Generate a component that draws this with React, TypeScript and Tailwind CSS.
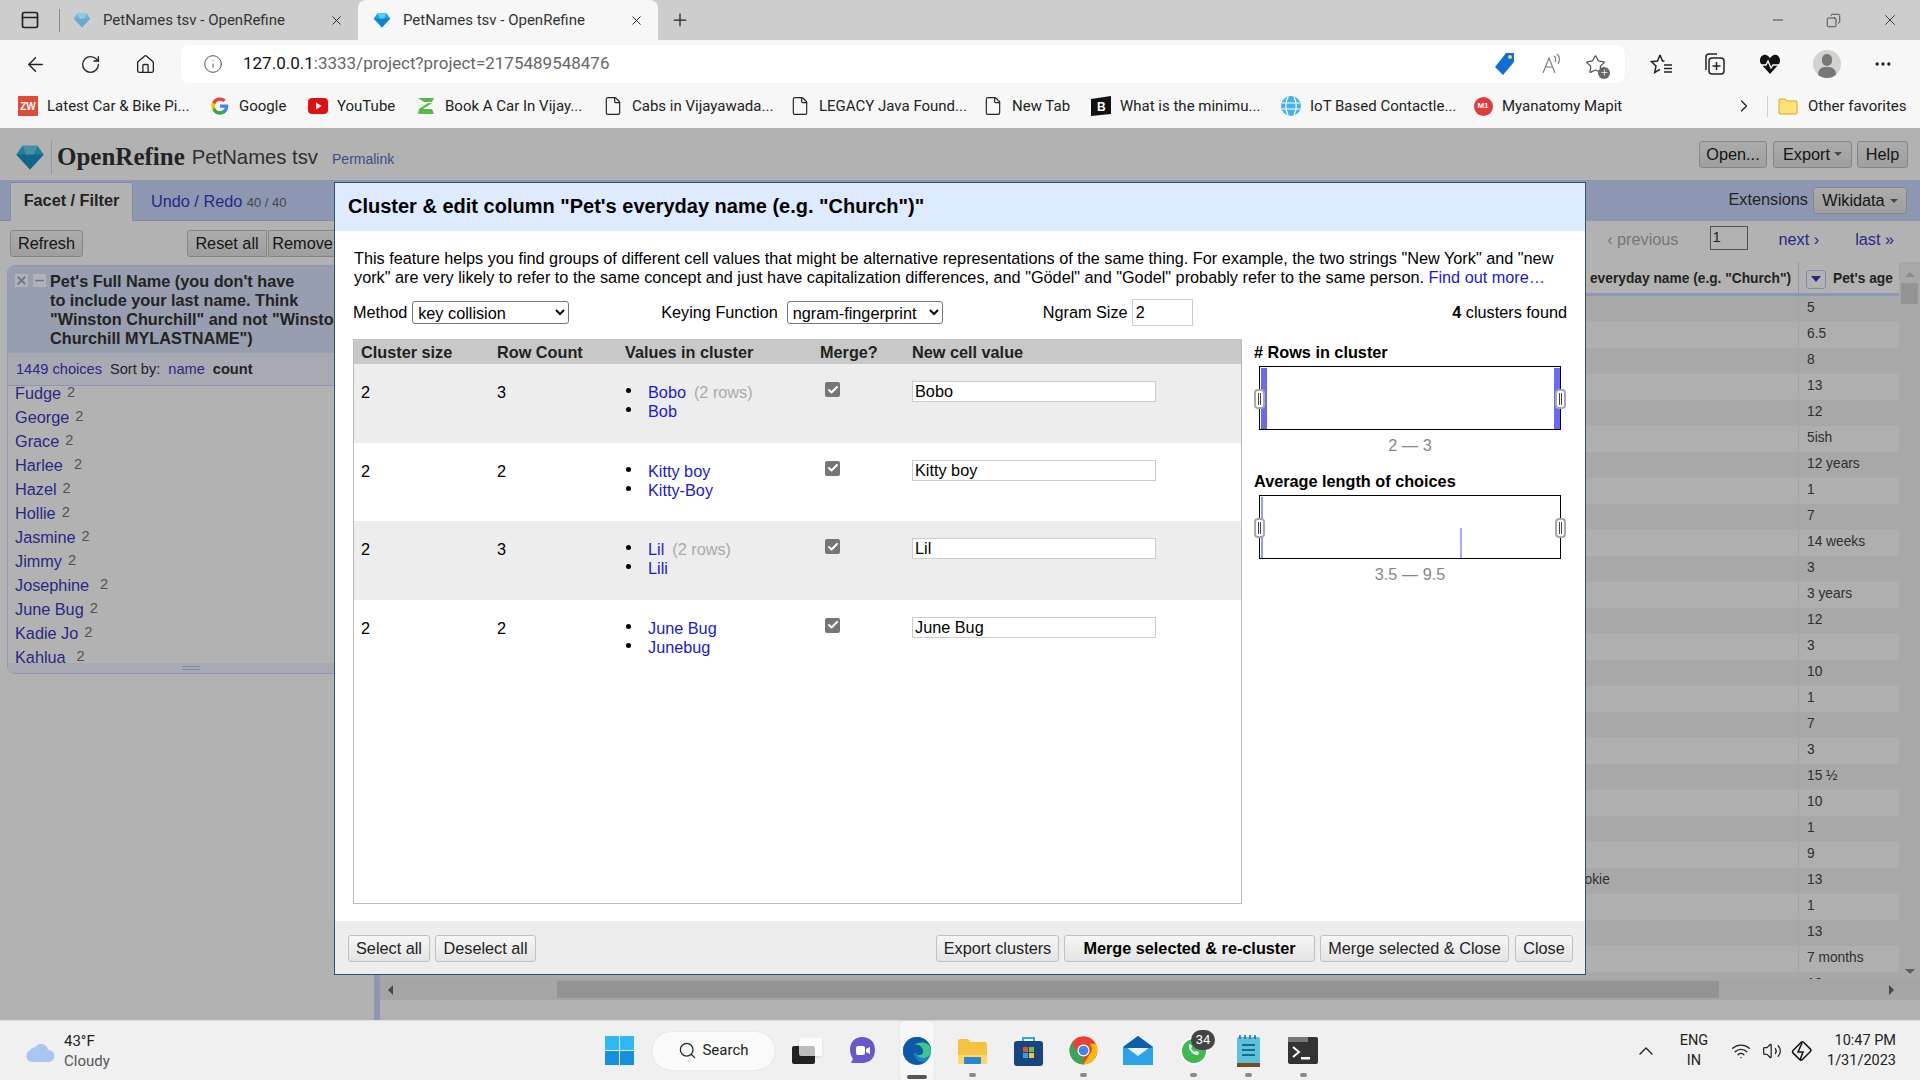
import { ArrowLeft, RotateCw, Home, Info, Plus, Minus, X, File, ChevronRight, Search, ChevronUp, Wifi, Volume2, Check, MoreHorizontal, Star, PanelTop, Copy } from "lucide-react";
import type { ReactNode } from "react";

const sans = "font-['Liberation_Sans',Arial,sans-serif]";

function Gem({ size = 18, faded = false }: { size?: number; faded?: boolean }) {
  return (
    <svg width={size} height={size} viewBox="0 0 24 24" className={faded ? "opacity-50" : ""}>
      <path d="M6 3h12l5 7-11 12L1 10z" fill="#1aa3e8" />
      <path d="M1 10h22L12 22z" fill="#0b86cf" />
      <path d="M6 3h12l-3 7H9z" fill="#5ccbf5" />
    </svg>
  );
}

function Tab({ active = false }: { active?: boolean }) {
  return (
    <div className={`flex h-10 w-[300px] items-center rounded-t-lg pl-[15px] ${active ? "bg-[#f7f7f7]" : ""}`}>
      <Gem faded={!active} />
      <span className="ml-[12px] w-[226px] whitespace-nowrap text-[15px] text-[#333]">PetNames tsv - OpenRefine</span>
      <X size={15} strokeWidth={1.5} className="text-[#222]" />
    </div>
  );
}

function TabStrip() {
  return (
    <div className="flex h-10 items-center bg-[#cdcdcd]">
      <PanelTop size={20} strokeWidth={2} className="ml-5 text-[#222]" />
      <div className="ml-[19px] mr-[-2px] h-[23px] w-px bg-[#8c8c8c]" />
      <Tab />
      <Tab active />
      <Plus size={20} strokeWidth={1.5} className="ml-3 text-[#222]" />
      <div className="ml-auto flex items-center gap-[40px] pr-[21px] text-[#222]">
        <Minus size={16} strokeWidth={1.2} />
        <Copy size={15} strokeWidth={1.2} className="scale-x-[-1]" />
        <X size={18} strokeWidth={1.1} />
      </div>
    </div>
  );
}

function AddressBar() {
  return (
    <div className="flex h-[48px] items-center bg-[#f7f7f7]">
      <ArrowLeft size={23} strokeWidth={1.5} className="ml-6 text-[#222]" />
      <RotateCw size={21} strokeWidth={1.5} className="ml-[33px] text-[#222]" />
      <Home size={21} strokeWidth={1.5} className="ml-[34px] text-[#222]" />
      <div className="ml-[25px] flex h-[38px] w-[1444px] items-center rounded-md bg-white shadow-[0_0_1px_rgba(0,0,0,0.15)]">
        <Info size={20} strokeWidth={1.2} className="ml-[22px] text-[#555]" />
        <span className="ml-[20px] text-[17px] text-[#666]"><span className="text-[#111]">127.0.0.1</span>:3333/project?project=2175489548476</span>
        <svg width="21" height="24" viewBox="0 0 21 24" className="ml-auto"><path d="M12 1h8v9L9 23 1 15z" fill="#0f6fd6" /><circle cx="16" cy="5" r="2" fill="#ffd447" /></svg>
        <svg width="22" height="22" viewBox="0 0 22 22" className="ml-[26px]" fill="none" stroke="#777" strokeWidth="1.1">
          <path d="m2 20 6-15 6 15M4.500 14h7" />
          <path d="M13 3c2 1.500 2 4 1 6M16 1c3 2.500 3 7 1 10" />
        </svg>
        <span className="relative ml-[22px] mr-[19px]">
          <Star size={21} strokeWidth={1.4} className="text-[#555]" />
          <span className="absolute -bottom-1 -right-1 flex h-3 w-3 items-center justify-center rounded-full bg-[#666]"><Plus size={9} className="text-white" /></span>
        </span>
      </div>
      <svg width="23" height="22" viewBox="0 0 23 22" className="ml-[25px]" fill="none" stroke="#222" strokeWidth="1.500">
        <path d="M10 2 7.500 8 1.500 8.700l4.500 4.300L4.700 19.500 10 16.300M10 2l2.500 6h2" />
        <path d="M14 12h8M14 15.500h8M14 19h8" />
      </svg>
      <svg width="22" height="24" viewBox="0 0 22 24" className="ml-[30px]" fill="none" stroke="#222" strokeWidth="1.5"><rect x="6" y="6" width="15" height="16" rx="3" /><path d="M3 18V5a3 3 0 0 1 3-3h8M13.500 10v8M9.500 14h8" /></svg>
      <svg width="22" height="21" viewBox="0 0 22 21" className="ml-[34px]"><path d="M11 20 2 10C-1 5 3 0 7 1c2 .5 3 2 4 3 1-1 2-2.500 4-3 4-1 8 4 5 9z" fill="#111" /><path d="M2 11h5l2-4 3 7 2-3h6" fill="none" stroke="#fff" strokeWidth="1.300" /></svg>
      <div className="relative ml-[32px] h-[28px] w-[28px] overflow-hidden rounded-full bg-[#d2d2cf]">
        <div className="absolute left-[9px] top-[4px] h-[12px] w-[10px] rounded-full bg-[#777]" />
        <div className="absolute left-[5px] top-[17px] h-[14px] w-[18px] rounded-full bg-[#777]" />
      </div>
      <MoreHorizontal size={20} className="ml-[32px] text-[#222]" />
    </div>
  );
}

function Bookmark({ icon, label, w, ml = 21 }: { icon: ReactNode; label: string; w: number; ml?: number }) {
  return (
    <div className="flex items-center" style={{ marginLeft: ml }}>
      <span className="flex w-5 justify-center">{icon}</span>
      <span className="ml-[9px] whitespace-nowrap text-[15px] text-[#222]" style={{ width: w }}>{label}</span>
    </div>
  );
}

const fileIcon = <File size={20} strokeWidth={1.4} className="text-[#222]" />;

function BookmarksBar() {
  return (
    <div className="flex h-10 items-center bg-[#f7f7f7] pb-[4px]">
      <Bookmark ml={18} w={142} label="Latest Car & Bike Pi..." icon={<span className={`flex h-5 w-5 items-center justify-center bg-[#dd4b39] text-[10px] font-bold text-white ${sans}`}>ZW</span>} />
      <Bookmark w={48} label="Google" icon={
        <svg width="18" height="18" viewBox="0 0 24 24">
          <path d="M23 12.300c0-.8-.1-1.600-.2-2.300H12v4.400h6.200a5.300 5.300 0 0 1-2.300 3.400v2.900h3.700c2.200-2 3.400-5 3.400-8.400z" fill="#4285f4" />
          <path d="M12 23.500c3.100 0 5.700-1 7.600-2.800l-3.700-2.900c-1 .7-2.300 1.100-3.900 1.100-3 0-5.500-2-6.400-4.700H1.800v3c1.900 3.800 5.800 6.300 10.200 6.300z" fill="#34a853" />
          <path d="M5.600 14.200a7 7 0 0 1 0-4.400v-3H1.800a11.500 11.500 0 0 0 0 10.400z" fill="#fbbc05" />
          <path d="M12 5.100c1.700 0 3.200.6 4.400 1.700l3.300-3.300A11.500 11.500 0 0 0 1.800 6.800l3.800 3C6.500 7.100 9 5.100 12 5.100z" fill="#ea4335" />
        </svg>} />
      <Bookmark w={58} label="YouTube" icon={
        <svg width="20" height="20" viewBox="0 0 20 20"><rect x="0" y="2" width="20" height="16" rx="4" fill="#e01010" /><path d="M8 6.500v7l5.500-3.500z" fill="#fff" /></svg>} />
      <Bookmark w={137} label="Book A Car In Vijay..." icon={
        <svg width="20" height="20" viewBox="0 0 20 20"><path d="M2 2h16l-2 4H8zM16 7l-9 6h9l2 5H2l1-5 9-6z" fill="#57b947" /></svg>} />
      <Bookmark w={137} label="Cabs in Vijayawada..." icon={fileIcon} />
      <Bookmark w={143} label="LEGACY Java Found..." icon={fileIcon} />
      <Bookmark w={58} label="New Tab" icon={fileIcon} />
      <Bookmark w={140} label="What is the minimu..." icon={
        <svg width="20" height="20" viewBox="0 0 20 20"><path d="M0 3 20 0v18L0 20z" fill="#111" /><text x="6" y="15" fontSize="12" fontWeight="700" fill="#fff" fontFamily="Liberation Sans">B</text></svg>} />
      <Bookmark w={142} label="IoT Based Contactle..." icon={
        <svg width="20" height="20" viewBox="0 0 20 20"><circle cx="10" cy="10" r="10" fill="#45b3ea" /><path d="M1 7h18M1 13h18M7 1c-3 6-3 12 0 18M13 1c3 6 3 12 0 18" fill="none" stroke="#fff" strokeWidth="1.200" /></svg>} />
      <Bookmark w={121} label="Myanatomy Mapit" icon={
        <span className={`flex h-[19px] w-[19px] items-center justify-center rounded-full bg-[#e03a3a] text-[8px] font-bold text-white ${sans}`}>M1</span>} />
      <ChevronRight size={20} strokeWidth={1.5} className="ml-[111px] text-[#222]" />
      <div className="ml-[13px] h-[21px] w-px bg-[#d0d0d0]" />
      <svg width="20" height="20" viewBox="0 0 20 20" className="ml-[10px]"><path d="M1 4a1 1 0 0 1 1-1h5l2 2h9a1 1 0 0 1 1 1v11a1 1 0 0 1-1 1H2a1 1 0 0 1-1-1z" fill="#ffe27a" stroke="#d6a520" /></svg>
      <span className="ml-[10px] whitespace-nowrap text-[15px] text-[#222]">Other favorites</span>
    </div>
  );
}

function Btn({ children, className = "" }: { children: ReactNode; className?: string }) {
  return (
    <button className={`flex h-[27px] items-center justify-center whitespace-nowrap rounded-[3px] border border-[#c0c0c0] bg-linear-to-b from-[#f6f6f6] to-[#e4e4e4] text-[16.25px] text-[#222] ${className}`}>
      {children}
    </button>
  );
}

const facetNames = [
  ["Fudge", 6], ["George", 6], ["Grace", 6], ["Harlee", 11], ["Hazel", 6], ["Hollie", 6],
  ["Jasmine", 6], ["Jimmy", 6], ["Josephine", 11], ["June Bug", 6], ["Kadie Jo", 6], ["Kahlua", 11],
] as const;

function LeftPanel() {
  return (
    <div className="flex w-[374px] flex-col bg-white">
      <div className="flex h-[41px] shrink-0 items-end border-b border-[#b9c6ee] bg-[#ccd8ff] pl-[10px]">
        <div className="-mb-px flex h-[39px] w-[123px] items-center justify-center border border-b-0 border-[#b9c6ee] bg-white pb-[3px] text-[16.25px] font-bold text-[#333]">Facet / Filter</div>
        <div className="mb-[7px] ml-[18px] whitespace-nowrap text-[16.25px] text-[#3a3ac0]">Undo / Redo <span className="text-[13px] text-[#666]">40 / 40</span></div>
      </div>
      <div className="flex h-[44px] shrink-0 items-center pl-[10px]">
        <Btn className="w-[73px]">Refresh</Btn>
        <Btn className="ml-[104px] w-[80px] rounded-r-none">Reset all</Btn>
        <Btn className="ml-[1px] w-[90px] rounded-l-none">Remove all</Btn>
      </div>
      <div className="ml-[7px] flex h-[409px] flex-col overflow-hidden rounded-[8px] border border-[#ccd8ff]">
        <div className="flex h-[87px] shrink-0 bg-[#d8e2fd] pt-[6px]">
          <span className="ml-[7px] mt-[2px] flex h-[13px] w-[13px] items-center justify-center bg-white"><X size={13} strokeWidth={3.5} className="text-[#97a8dc]" /></span>
          <span className="ml-[5px] mt-[2px] flex h-[13px] w-[13px] items-center justify-center bg-white"><Minus size={13} strokeWidth={3} className="text-[#97a8dc]" /></span>
          <div className="ml-[4px] whitespace-nowrap text-[16.25px] font-bold leading-[19px] text-[#333]">
            Pet's Full Name (you don't have<br />to include your last name. Think<br />"Winston Churchill" and not "Winston<br />Churchill MYLASTNAME")
          </div>
        </div>
        <div className="flex h-[33px] shrink-0 items-center whitespace-nowrap border-b border-[#ccd8ff] bg-[#f0f4ff] pl-[8px] pt-[1px] text-[14.6px]">
          <span className="text-[#3a3ac0]">1449 choices</span>
          <span className="ml-[8px] text-[#333]">Sort by:</span>
          <span className="ml-[8px] text-[#3a3ac0]">name</span>
          <span className="ml-[8px] font-bold text-[#333]">count</span>
        </div>
        <div className="h-[278px] overflow-hidden">
          <div className="-mt-[5px]">
            {facetNames.map(([name, gap]) => (
              <div key={name} className="flex h-[24px] items-center pl-[7px] text-[16.25px] text-[#3a3ac0]">
                {name}<span className="text-[14.6px] text-[#777]" style={{ marginLeft: gap }}>2</span>
              </div>
            ))}
          </div>
        </div>
        <div className="flex h-[10px] justify-center bg-[#f0f4ff] pt-[3px]"><div className="h-[4px] w-[18px] border-y border-[#b9c6ee]" /></div>
      </div>
    </div>
  );
}

const ages = ["5", "6.5", "8", "13", "12", "5ish", "12 years", "1", "7", "14 weeks", "3", "3 years", "12", "3", "10", "1", "7", "3", "15 ½", "10", "1", "9", "13", "1", "13", "7 months", "10"];

function DataTable() {
  return (
    <div className="flex h-[717px] shrink-0">
      <div className="flex-1 overflow-hidden">
        <div className="grid h-[34px] grid-cols-[1179px_240px_99px] border-b-[3px] border-b-[#ccd8ff] text-[13.75px] font-bold text-[#333]">
          <div />
          <div className="flex items-center justify-end whitespace-nowrap border-r border-[#ccd8ff] pr-[7px] pt-[4px]">Pet's everyday name (e.g. "Church")</div>
          <div className="flex items-center whitespace-nowrap pl-[7px] pt-[3px]">
            <span className="flex h-[19px] w-[20px] items-center justify-center rounded-[3px] border border-[#b9c6ee]"><span className="h-0 w-0 border-x-[5px] border-t-[6px] border-x-transparent border-t-[#3a3ac0]" /></span>
            <span className="ml-[7px]">Pet's age</span>
          </div>
        </div>
        {ages.map((age, i) => (
          <div key={i} className={`grid h-[26px] grid-cols-[1179px_240px_99px] pb-[2px] text-[13.75px] text-[#444] ${i % 2 === 0 ? "bg-[#f1f1f1]" : "bg-[#fbfbfb]"}`}>
            <div />
            <div className="flex items-center border-r border-[#e8e8e8] pl-[8px]">{i === 22 ? "Cookie" : ""}</div>
            <div className="flex items-center pl-[8px]">{age}</div>
          </div>
        ))}
      </div>
      <div className="flex w-[21px] flex-col items-center bg-[#f1f1f1] pt-[10px]">
        <span className="h-0 w-0 border-x-[5px] border-b-[5px] border-x-transparent border-b-[#c8c8c8]" />
        <div className="mt-[6px] h-[21px] w-[17px] bg-[#d3d3d3]" />
        <span className="mt-auto mb-[5px] h-0 w-0 border-x-[5px] border-t-[5px] border-x-transparent border-t-[#888]" />
      </div>
    </div>
  );
}

function RightPanel() {
  return (
    <div className="flex flex-1 flex-col bg-white">
      <div className="flex h-[41px] shrink-0 items-center justify-end bg-[#ccd8ff] pr-[13px] text-[16.25px] text-[#333]">
        <span className="mb-[2px] mr-[5px]">Extensions</span>
        <Btn className="w-[94px] gap-[5px]">Wikidata <span className="h-0 w-0 border-x-[4px] border-t-[4px] border-x-transparent border-t-[#666]" /></Btn>
      </div>
      <div className="flex h-[41px] shrink-0 items-center justify-end pb-[4px] text-[16.25px]">
        <span className="whitespace-nowrap text-[#aaa]">‹ previous</span>
        <span className="-mt-[4px] ml-[31px] mr-[31px] h-[24px] w-[38px] border border-[#777] pl-[2px] text-[15px] leading-[20px] text-[#333]">1</span>
        <span className="mr-[36px] whitespace-nowrap text-[#3a3ac0]">next ›</span>
        <span className="mr-[26px] whitespace-nowrap text-[#3a3ac0]">last »</span>
      </div>
      <DataTable />
      <div className="flex h-[21px] shrink-0 items-center bg-[#ececec]">
        <span className="ml-[8px] h-0 w-0 border-y-[5px] border-r-[5px] border-y-transparent border-r-[#666]" />
        <div className="ml-[164px] h-[17px] w-[1162px] bg-[#d3d3d3]" />
        <span className="ml-[170px] h-0 w-0 border-y-[5px] border-l-[5px] border-y-transparent border-l-[#666]" />
      </div>
    </div>
  );
}

function Handle({ left }: { left: number }) {
  return (
    <span className="absolute top-[22px] flex h-[20px] w-[11px] justify-center gap-px rounded-[4px] border-2 border-[#a8a8a8] bg-white py-[2px]" style={{ left }}>
      <span className="w-px bg-[#444]" /><span className="w-px bg-[#444]" />
    </span>
  );
}

function Histogram({ title, range, bars }: { title: string; range: string; bars: ReactNode }) {
  return (
    <div className="h-[129px]">
      <div className="text-[16.25px] font-bold leading-[19px] text-black">{title}</div>
      <div className="relative ml-[5px] mt-[4px] h-[64px] w-[302px] border border-black">
        {bars}
        <Handle left={-6} />
        <Handle left={295} />
      </div>
      <div className="mt-[6px] pl-[5px] text-center text-[16.25px] leading-[19px] text-[#888]">{range}</div>
    </div>
  );
}

const clusters = [
  { size: 2, rows: 3, a: "Bobo", note: "(2 rows)", b: "Bob" },
  { size: 2, rows: 2, a: "Kitty boy", note: "", b: "Kitty-Boy" },
  { size: 2, rows: 3, a: "Lil", note: "(2 rows)", b: "Lili" },
  { size: 2, rows: 2, a: "June Bug", note: "", b: "Junebug" },
];

function ClusterTable() {
  return (
    <div className="-ml-px h-[565px] w-[889px] shrink-0 border border-t-0 border-[#bbb]">
      <div className="grid h-[25px] grid-cols-[136px_128px_195px_92px_1fr] items-center bg-[#c8c8c8] pl-[7px] pt-[1px] text-[16.25px] font-bold text-[#222]">
        <span>Cluster size</span><span>Row Count</span><span>Values in cluster</span><span>Merge?</span><span>New cell value</span>
      </div>
      {clusters.map((c, i) => (
        <div key={c.a} className={`grid h-[78.500px] grid-cols-[136px_128px_23px_172px_92px_1fr] pl-[7px] pt-[18px] text-[16.25px] leading-[19px] text-black ${i % 2 === 0 ? "bg-[#ededed]" : "bg-white"}`}>
          <span className="pt-[1px]">{c.size}</span>
          <span className="pt-[1px]">{c.rows}</span>
          <div className="flex flex-col gap-[8px] pl-[1px] pt-[6px]">
            <span className="h-[5px] w-[5px] rounded-full bg-black" />
            <span className="mt-[6px] h-[5px] w-[5px] rounded-full bg-black" />
          </div>
          <div className="whitespace-nowrap pt-[1px]">
            <div className="text-[#1a1acc]">{c.a}{c.note && <span className="ml-[8px] text-[#aaa]">{c.note}</span>}</div>
            <div className="text-[#1a1acc]">{c.b}</div>
          </div>
          <div className="pl-[5px]">
            <span className="flex h-[15px] w-[15px] items-center justify-center rounded-[2px] bg-[#767676]"><Check size={12} strokeWidth={4} className="text-white" /></span>
          </div>
          <div className="-mt-[1px]">
            <input readOnly value={c.a} className="h-[21px] w-[244px] border border-[#ccc] bg-white pl-[2px] text-[16.25px] text-black outline-none" />
          </div>
        </div>
      ))}
    </div>
  );
}

function ClusterDialog() {
  return (
    <div className={`absolute left-[334px] top-[54px] flex h-[793px] w-[1252px] flex-col border border-[#2c5270] bg-white ${sans}`}>
      <div className="flex h-[48px] shrink-0 items-center bg-[#deeafd] pb-[2px] pl-[13px] text-[20px] font-bold text-black">
        Cluster &amp; edit column "Pet's everyday name (e.g. "Church")"
      </div>
      <div className="flex-1 pl-[19px] pr-[18px] pt-[18px]">
        <p className="text-[16.25px] leading-[19px] text-black">
          This feature helps you find groups of different cell values that might be alternative representations of the same thing. For example, the two strings "New York" and "new york" are very likely to refer to the same concept and just have capitalization differences, and "Gödel" and "Godel" probably refer to the same person. <span className="text-[#1a1acc]">Find out more…</span>
        </p>
        <div className="mt-[12px] flex h-[27px] items-center text-[16.25px] text-black">
          <span className="-ml-px">Method</span>
          <select defaultValue="key collision" className="ml-[5px] h-[23px] w-[157px] rounded-[3px] border border-[#767676] bg-white pl-[1px] text-[16.25px]">
            <option>key collision</option>
          </select>
          <span className="ml-[92px]">Keying Function</span>
          <select defaultValue="ngram-fingerprint" className="ml-[9px] h-[23px] w-[156px] rounded-[3px] border border-[#767676] bg-white pl-[1px] text-[16.25px]">
            <option>ngram-fingerprint</option>
          </select>
          <span className="ml-[100px]">Ngram Size</span>
          <input readOnly value="2" className="ml-[4px] h-[27px] w-[61px] border border-[#ccc] pl-[3px] text-[16.25px] outline-none" />
          <span className="ml-auto"><b>4</b> clusters found</span>
        </div>
        <div className="mt-[13px] flex">
          <ClusterTable />
          <div className="ml-[12px] flex flex-col pt-[4px]">
            <Histogram title="# Rows in cluster" range="2 — 3" bars={<>
              <span className="absolute bottom-0 left-px top-[1px] w-[6px] bg-[#6a6af5]" />
              <span className="absolute bottom-0 right-0 top-[1px] w-[6px] bg-[#6a6af5]" />
            </>} />
            <Histogram title="Average length of choices" range="3.5 — 9.5" bars={<>
              <span className="absolute bottom-0 left-px top-[1px] w-[2px] bg-[#9a9af8]" />
              <span className="absolute bottom-0 left-[200px] top-[32px] w-[2px] bg-[#a8a8fa]" />
            </>} />
          </div>
        </div>
      </div>
      <div className="flex h-[53px] shrink-0 items-center bg-[#ededed] pl-[13px] pr-[12px] pt-[1px]">
        <Btn className="w-[82px]">Select all</Btn>
        <Btn className="ml-[5px] w-[101px]">Deselect all</Btn>
        <Btn className="ml-auto w-[123px]">Export clusters</Btn>
        <Btn className="ml-[5px] w-[251px] font-bold text-black">Merge selected &amp; re-cluster</Btn>
        <Btn className="ml-[5px] w-[189px]">Merge selected &amp; Close</Btn>
        <Btn className="ml-[6px] w-[58px]">Close</Btn>
      </div>
    </div>
  );
}

function OpenRefinePage() {
  return (
    <div className={`relative h-[892px] overflow-hidden bg-white ${sans}`}>
      <div className="flex h-[52px] items-center">
        <div className="mt-[6px] flex items-center">
          <svg width="30" height="30" viewBox="0 0 24 24" className="ml-[15px]">
            <path d="M6 3h12l5 7-11 12L1 10z" fill="#33b5e0" />
            <path d="M1 10h22L12 22z" fill="#1b93c4" />
            <path d="M6 3h12l-3 7H9z" fill="#63d2ee" />
          </svg>
          <div className="ml-[6px] h-[33px] w-px bg-[#ccd8ff]" />
          <span className="ml-[5px] font-['Liberation_Serif',serif] text-[25px] font-bold text-[#333]">OpenRefine</span>
          <span className="ml-[7px] mt-[1px] text-[20.300px] text-[#444]">PetNames tsv</span>
          <span className="ml-[14px] mt-[5px] text-[14px] text-[#5a6fc0]">Permalink</span>
        </div>
        <div className="ml-auto flex items-center gap-[5px] pr-[12px]">
          <Btn className="w-[68px]">Open...</Btn>
          <Btn className="ml-[1px] w-[79px] gap-[4px]">Export <span className="h-0 w-0 border-x-[4px] border-t-[4px] border-x-transparent border-t-[#666]" /></Btn>
          <Btn className="w-[51px]">Help</Btn>
        </div>
      </div>
      <div className="flex h-[840px]">
        <LeftPanel />
        <div className="w-[6px] shrink-0 bg-[#ccd8ff]" />
        <RightPanel />
      </div>
      <div className="absolute inset-0 bg-black/30" />
      <ClusterDialog />
    </div>
  );
}

function TaskIcon({ children, dot, ml }: { children: ReactNode; dot?: boolean; ml: number }) {
  return (
    <div className="relative flex h-[60px] w-[30px] items-center justify-center" style={{ marginLeft: ml }}>
      {children}
      {dot && <span className="absolute bottom-[4px] h-[4px] w-[7px] rounded-full bg-[#8a8a8a]" />}
    </div>
  );
}

function Taskbar() {
  return (
    <div className="flex h-[60px] items-center border-t border-[#dcdcdc] bg-[#f0f0f0] text-[#222]">
      <svg width="32" height="24" viewBox="0 0 32 24" className="ml-[24px]"><path d="M8 23a6 6 0 0 1-2-11.500 5 5 0 0 1 5-3 7 7 0 0 1 13 2.500 6 6 0 0 1 1 12z" fill="#a9c6ee" /></svg>
      <div className="ml-[8px] w-[540px] text-[15px] leading-[20px]">
        <div>43°F</div>
        <div className="text-[#555]">Cloudy</div>
      </div>
      <svg width="29" height="29" viewBox="0 0 29 29" className="ml-[1px]">
        <rect x="0" y="0" width="14" height="14" fill="#2fb8f5" />
        <rect x="15" y="0" width="14" height="14" fill="#2fb8f5" />
        <rect x="0" y="15" width="14" height="14" fill="#1490e0" />
        <rect x="15" y="15" width="14" height="14" fill="#1490e0" />
      </svg>
      <div className="ml-[18px] flex h-[38px] w-[123px] items-center justify-center gap-[5px] rounded-full bg-[#fafafa] text-[15px] shadow-[0_0_1px_rgba(0,0,0,0.2)]">
        <Search size={19} strokeWidth={1.6} /> Search
      </div>
      <TaskIcon ml={17}>
        <span className="relative block h-[26px] w-[30px]">
          <span className="absolute bottom-0 left-0 h-[18px] w-[23px] rounded-[2px] bg-[#222]" />
          <span className="absolute right-0 top-0 h-[18px] w-[23px] rounded-[2px] bg-white/70 shadow-sm" />
        </span>
      </TaskIcon>
      <TaskIcon ml={25}>
        <svg width="29" height="29" viewBox="0 0 29 29"><path d="M14 1c8 0 13 5 13 13s-5 13-13 13H3l2-4C3 20 2 17 2 14 2 6 7 1 14 1z" fill="#6a58c9" /><rect x="8" y="10" width="9" height="9" rx="2" fill="#fff" /><path d="m18 13 4-2v7l-4-2z" fill="#fff" /></svg>
      </TaskIcon>
      <div className="relative ml-[23px] flex h-[60px] w-[34px] items-center justify-center rounded-[4px] bg-[#f7f7f7] shadow-[0_0_1px_rgba(0,0,0,0.25)]">
        <svg width="30" height="30" viewBox="0 0 30 30">
          <circle cx="15" cy="15" r="14" fill="#1b7fc8" />
          <path d="M1 15a14 14 0 0 1 28 0c0 5-4 7-8 7-5 0-6-3-6-5h-3c0 6 5 10 11 9a14 14 0 0 1-22-11z" fill="#0c5aa6" />
          <path d="M29 15c0 5-4 7-8 7-3 0-5-1-6-3 5 1 7-2 6-5-1-4-5-6-9-5 5-4 17-4 17 6z" fill="#3cc88c" />
        </svg>
        <span className="absolute bottom-[2px] h-[4px] w-[20px] rounded-full bg-[#555]" />
      </div>
      <TaskIcon ml={23} dot>
        <svg width="29" height="26" viewBox="0 0 29 26"><path d="M0 3a2 2 0 0 1 2-2h8l3 3h14a2 2 0 0 1 2 2v18a2 2 0 0 1-2 2H2a2 2 0 0 1-2-2z" fill="#f5c242" /><rect x="0" y="17" width="29" height="9" fill="#ffd769" /><rect x="6" y="19" width="17" height="7" rx="1" fill="#2a86d0" /></svg>
      </TaskIcon>
      <TaskIcon ml={26}>
        <svg width="29" height="30" viewBox="0 0 29 30">
          <path d="M9 6V2h11v4" fill="none" stroke="#35a9d8" strokeWidth="2" />
          <rect x="0" y="5" width="29" height="25" rx="3" fill="#17457f" />
          <rect x="9" y="11" width="5" height="5" fill="#ea4d2d" /><rect x="15" y="11" width="5" height="5" fill="#7cbb3a" />
          <rect x="9" y="17" width="5" height="5" fill="#2ca2ea" /><rect x="15" y="17" width="5" height="5" fill="#fbc02d" />
        </svg>
      </TaskIcon>
      <TaskIcon ml={25} dot>
        <svg width="29" height="29" viewBox="0 0 48 48">
          <circle cx="24" cy="24" r="23" fill="#e94235" />
          <path d="M24 1a23 23 0 0 1 20 12H24a11 11 0 0 0-10 6L5 11A23 23 0 0 1 24 1z" fill="#e94235" />
          <path d="M44 13a23 23 0 0 1-20 34l10-17a11 11 0 0 0 0-17z" fill="#fbbc05" />
          <path d="M5 11l10 18a11 11 0 0 0 9 6l-1 12A23 23 0 0 1 5 11z" fill="#34a853" />
          <circle cx="24" cy="24" r="10" fill="#fff" /><circle cx="24" cy="24" r="8" fill="#4285f4" />
        </svg>
      </TaskIcon>
      <TaskIcon ml={25}>
        <svg width="30" height="29" viewBox="0 0 30 29"><path d="M15 0 30 11v18H0V11z" fill="#2aa3e8" /><path d="M15 0 30 11 15 17 0 11z" fill="#0d5fae" /><path d="M4 12h22l-11 8z" fill="#e8f3fb" /></svg>
      </TaskIcon>
      <TaskIcon ml={25} dot>
        <svg width="29" height="29" viewBox="0 0 29 29"><circle cx="15" cy="15" r="13" fill="#3dbb50" stroke="#fff" strokeWidth="2" /><path d="M10 9c-1 5 4 10 9 10l1-3-3-1-1 1c-2-1-3-2-4-4l1-1-1-3z" fill="#fff" /></svg>
        <span className="absolute -right-[7px] top-[9px] flex h-[20px] w-[24px] items-center justify-center rounded-full bg-[#444] text-[13px] text-white">34</span>
      </TaskIcon>
      <TaskIcon ml={25} dot>
        <svg width="23" height="32" viewBox="0 0 23 32"><rect x="0" y="2" width="23" height="28" rx="2" fill="#5bc2de" /><rect x="0" y="28" width="23" height="4" fill="#7a4b1e" /><path d="M5 10h13M5 15h13M5 20h13" stroke="#1d6a85" strokeWidth="2" /><path d="M3 0v4M8 0v4M13 0v4M18 0v4" stroke="#1d6a85" strokeWidth="1.500" /></svg>
      </TaskIcon>
      <TaskIcon ml={25} dot>
        <svg width="30" height="27" viewBox="0 0 30 27"><rect width="30" height="27" rx="2" fill="#333" /><rect width="20" height="5" fill="#777" /><path d="m5 10 6 5-6 5" fill="none" stroke="#fff" strokeWidth="2" /><rect x="13" y="20" width="9" height="2.500" fill="#fff" /></svg>
      </TaskIcon>
      <ChevronUp size={24} strokeWidth={1.4} className="ml-[316px]" />
      <div className="ml-[21px] w-[30px] text-center text-[14.5px] leading-[20px]">ENG<br />IN</div>
      <Wifi size={20} strokeWidth={1.6} className="ml-[22px]" />
      <Volume2 size={20} strokeWidth={1.5} className="ml-[11px]" />
      <svg width="22" height="22" viewBox="0 0 22 22" className="ml-[8px]" fill="none" stroke="#111" strokeWidth="1.500"><rect x="4" y="5" width="15" height="13" rx="2" transform="rotate(-45 11 11)" /><path d="m12 3-4 9h5l-3 8" /></svg>
      <div className="ml-auto pr-[24px] text-right text-[14.5px] leading-[20px]">10:47 PM<br />1/31/2023</div>
    </div>
  );
}

export default function App() {
  return (
    <div className="h-[1080px] w-[1920px] overflow-hidden font-['Roboto',sans-serif]">
      <TabStrip />
      <AddressBar />
      <BookmarksBar />
      <OpenRefinePage />
      <Taskbar />
    </div>
  );
}
